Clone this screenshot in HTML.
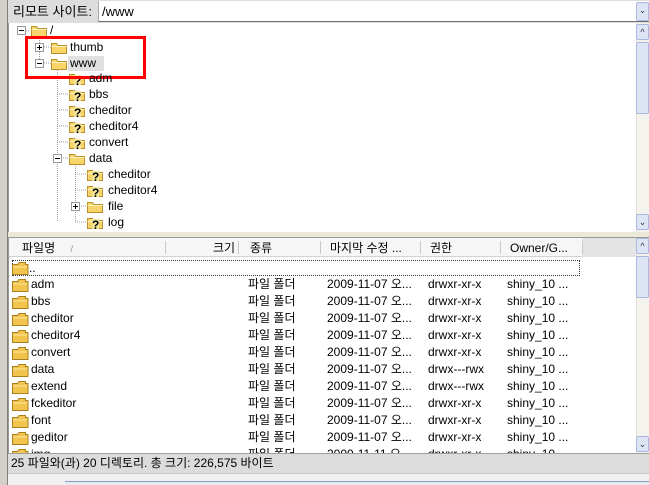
<!DOCTYPE html>
<html><head><meta charset="utf-8"><style>
*{margin:0;padding:0;box-sizing:border-box}
body{width:649px;height:485px;background:#ece9d8;font-family:"Liberation Sans","Noto Sans CJK KR",sans-serif;font-size:12px;line-height:14px;color:#000;position:relative;overflow:hidden}
.abs{position:absolute}
.sb{position:absolute;background:#f4f3ee;border-left:1px solid #e0dfd8}
.btn{position:absolute;width:13px;height:16px;background:#dde4f6;border:1px solid #a8b8de;border-radius:2px;font-size:9px;line-height:14px;text-align:center;color:#333}
.thumb{position:absolute;background:#dde4f6;border:1px solid #a8b8de;border-radius:2px}
.row{position:absolute;left:0;height:17px;white-space:nowrap}
.row span{position:absolute;top:1px}
.t{position:absolute;white-space:nowrap}
</style></head><body>
<div class="abs" style="left:0;top:0;width:8px;height:485px;background:#d4d0c8;border-right:1px solid #808080"></div>
<div class="abs" style="left:8px;top:0;width:641px;height:23px;background:#ddd"></div>
<div class="t" style="left:13px;top:4px;font-size:13px;line-height:15px">리모트 사이트:</div>
<div class="abs" style="left:98px;top:1px;width:551px;height:21px;background:#fff;border-bottom:1px solid #707070;border-left:1px solid #aaa"></div>
<div class="t" style="left:102px;top:4px;font-size:13px;line-height:15px">/www</div>
<div class="btn" style="left:636px;top:2px;height:19px">&#8964;</div>
<div class="abs" style="left:8px;top:23px;width:641px;height:209px;background:#fff;border-left:1px solid #999"></div>
<div class="sb" style="left:636px;top:23px;width:13px;height:209px"></div>
<div class="btn" style="left:636px;top:24px">^</div>
<div class="thumb" style="left:636px;top:42px;width:13px;height:72px"></div>
<div class="btn" style="left:636px;top:214px">&#8964;</div>
<svg class="abs" style="left:0;top:0" width="636" height="232">
<defs>
<g id="f"><path d="M0.5 2.5h5l1.5 2h8.5v8h-15z" fill="#f7d56a" stroke="#b8902a"/><path d="M0.5 5.5h15" stroke="#fff3c0"/></g>
<g id="q"><use href="#f"/><rect x="5" y="3" width="7" height="10" fill="#f3e59a"/><text x="5" y="13" font-family="Liberation Sans" font-weight="bold" font-size="12">?</text></g>
<g id="m"><rect x="0.5" y="0.5" width="8" height="8" fill="#fff" stroke="#999"/><path d="M2 4.5h5" stroke="#000"/></g>
<g id="p"><rect x="0.5" y="0.5" width="8" height="8" fill="#fff" stroke="#999"/><path d="M2 4.5h5M4.5 2v5" stroke="#000"/></g>
</defs>
<g stroke="#a0a0a0" stroke-dasharray="1,1" fill="none">
<path d="M39.5 36v28M44 47h8M44 63h8M57.5 70v152M57 78h12M57 94h12M57 110h12M57 126h12M57 142h12M57 158h12M75.5 166v56M75 174h12M75 190h12M75 206h12M75 222h12M22 31h8"/>
</g>
<use href="#m" x="17" y="26"/><use href="#f" x="31" y="24"/>
<use href="#p" x="35" y="43"/><use href="#f" x="51" y="41"/>
<use href="#m" x="35" y="59"/><use href="#f" x="51" y="57"/>
<rect x="68" y="56" width="36" height="15" fill="#e0e0e0"/>
<use href="#q" x="69" y="72"/><use href="#q" x="69" y="88"/><use href="#q" x="69" y="104"/><use href="#q" x="69" y="120"/><use href="#q" x="69" y="136"/>
<use href="#m" x="53" y="154"/><use href="#f" x="69" y="152"/>
<use href="#q" x="87" y="168"/><use href="#q" x="87" y="184"/>
<use href="#p" x="71" y="202"/><use href="#f" x="87" y="200"/>
<use href="#q" x="87" y="216"/>
<rect x="26.5" y="37.5" width="118" height="40" fill="none" stroke="#f00" stroke-width="3"/>
</svg>
<div class="t" style="left:50px;top:23px">/</div>
<div class="t" style="left:70px;top:40px">thumb</div>
<div class="t" style="left:70px;top:56px">www</div>
<div class="t" style="left:89px;top:71px">adm</div>
<div class="t" style="left:89px;top:87px">bbs</div>
<div class="t" style="left:89px;top:103px">cheditor</div>
<div class="t" style="left:89px;top:119px">cheditor4</div>
<div class="t" style="left:89px;top:135px">convert</div>
<div class="t" style="left:89px;top:151px">data</div>
<div class="t" style="left:108px;top:167px">cheditor</div>
<div class="t" style="left:108px;top:183px">cheditor4</div>
<div class="t" style="left:108px;top:199px">file</div>
<div class="t" style="left:108px;top:215px">log</div>
<div class="abs" style="left:8px;top:237px;width:641px;height:216px;background:#fff;border-left:1px solid #999;border-top:1px solid #999"></div>
<div class="abs" style="left:9px;top:238px;width:627px;height:19px;background:#e4e4e4"></div>
<div class="abs" style="left:9px;top:238px;width:573px;height:19px;background:#f6f6f6;border-bottom:1px solid #d0d0d0"></div>
<svg class="abs" style="left:0;top:238px" width="600" height="19"><g stroke="#c8c8c8"><path d="M165.5 3v13M238.5 3v13M320.5 3v13M420.5 3v13M500.5 3v13M582.5 3v13"/></g></svg>
<div class="t" style="left:22px;top:241px">파일명 <span style="color:#888;font-size:9px;margin-left:12px">/</span></div>
<div class="t" style="left:213px;top:241px">크기</div>
<div class="t" style="left:250px;top:241px">종류</div>
<div class="t" style="left:330px;top:241px">마지막 수정 ...</div>
<div class="t" style="left:430px;top:241px">권한</div>
<div class="t" style="left:510px;top:241px">Owner/G...</div>
<div class="sb" style="left:636px;top:238px;width:13px;height:215px"></div>
<div class="btn" style="left:636px;top:238px">^</div>
<div class="thumb" style="left:636px;top:256px;width:13px;height:42px"></div>
<div class="btn" style="left:636px;top:436px">&#8964;</div>
<div class="abs" style="left:12px;top:260px;width:568px;height:16px;border:1px dotted #333"></div>
<div class="abs" style="left:9px;top:259px;width:627px;height:194px;overflow:hidden">
<svg class="abs" style="left:0;top:0" width="30" height="200">
<defs><g id="lf"><path d="M0.5 3.5h5l1.5 -2h6.5v2h2.5v10h-15.5z" fill="#f2c44e" stroke="#a8801e"/><path d="M1 6h14" stroke="#fbe7a0"/></g></defs>
<use href="#lf" x="3" y="2"/><use href="#lf" x="3" y="19"/><use href="#lf" x="3" y="36"/><use href="#lf" x="3" y="53"/><use href="#lf" x="3" y="70"/><use href="#lf" x="3" y="87"/><use href="#lf" x="3" y="104"/><use href="#lf" x="3" y="121"/><use href="#lf" x="3" y="138"/><use href="#lf" x="3" y="155"/><use href="#lf" x="3" y="172"/><use href="#lf" x="3" y="189"/>
</svg>
<div class="row" style="top:1px"><span style="left:20px">..</span></div>
<div class="row" style="top:17px"><span style="left:22px">adm</span><span style="left:239px">파일 폴더</span><span style="left:318px">2009-11-07 오...</span><span style="left:419px">drwxr-xr-x</span><span style="left:498px">shiny_10 ...</span></div>
<div class="row" style="top:34px"><span style="left:22px">bbs</span><span style="left:239px">파일 폴더</span><span style="left:318px">2009-11-07 오...</span><span style="left:419px">drwxr-xr-x</span><span style="left:498px">shiny_10 ...</span></div>
<div class="row" style="top:51px"><span style="left:22px">cheditor</span><span style="left:239px">파일 폴더</span><span style="left:318px">2009-11-07 오...</span><span style="left:419px">drwxr-xr-x</span><span style="left:498px">shiny_10 ...</span></div>
<div class="row" style="top:68px"><span style="left:22px">cheditor4</span><span style="left:239px">파일 폴더</span><span style="left:318px">2009-11-07 오...</span><span style="left:419px">drwxr-xr-x</span><span style="left:498px">shiny_10 ...</span></div>
<div class="row" style="top:85px"><span style="left:22px">convert</span><span style="left:239px">파일 폴더</span><span style="left:318px">2009-11-07 오...</span><span style="left:419px">drwxr-xr-x</span><span style="left:498px">shiny_10 ...</span></div>
<div class="row" style="top:102px"><span style="left:22px">data</span><span style="left:239px">파일 폴더</span><span style="left:318px">2009-11-07 오...</span><span style="left:419px">drwx---rwx</span><span style="left:498px">shiny_10 ...</span></div>
<div class="row" style="top:119px"><span style="left:22px">extend</span><span style="left:239px">파일 폴더</span><span style="left:318px">2009-11-07 오...</span><span style="left:419px">drwx---rwx</span><span style="left:498px">shiny_10 ...</span></div>
<div class="row" style="top:136px"><span style="left:22px">fckeditor</span><span style="left:239px">파일 폴더</span><span style="left:318px">2009-11-07 오...</span><span style="left:419px">drwxr-xr-x</span><span style="left:498px">shiny_10 ...</span></div>
<div class="row" style="top:153px"><span style="left:22px">font</span><span style="left:239px">파일 폴더</span><span style="left:318px">2009-11-07 오...</span><span style="left:419px">drwxr-xr-x</span><span style="left:498px">shiny_10 ...</span></div>
<div class="row" style="top:170px"><span style="left:22px">geditor</span><span style="left:239px">파일 폴더</span><span style="left:318px">2009-11-07 오...</span><span style="left:419px">drwxr-xr-x</span><span style="left:498px">shiny_10 ...</span></div>
<div class="row" style="top:187px"><span style="left:22px">img</span><span style="left:239px">파일 폴더</span><span style="left:318px">2009-11-11 오...</span><span style="left:419px">drwxr-xr-x</span><span style="left:498px">shiny_10 ...</span></div>
</div>
<div class="abs" style="left:8px;top:453px;width:641px;height:20px;background:#dcdcdc;border-top:1px solid #a0a0a0"></div>
<div class="t" style="left:11px;top:456px">25 파일와(과) 20 디렉토리. 총 크기: 226,575 바이트</div>
<div class="abs" style="left:8px;top:473px;width:641px;height:12px;background:#f0f0f0;border-top:1px solid #c8c8c8"></div>
<div class="abs" style="left:65px;top:481px;width:584px;height:4px;background:#e6eaf0;border-top:1px solid #8aa0c0"></div>
</body></html>
